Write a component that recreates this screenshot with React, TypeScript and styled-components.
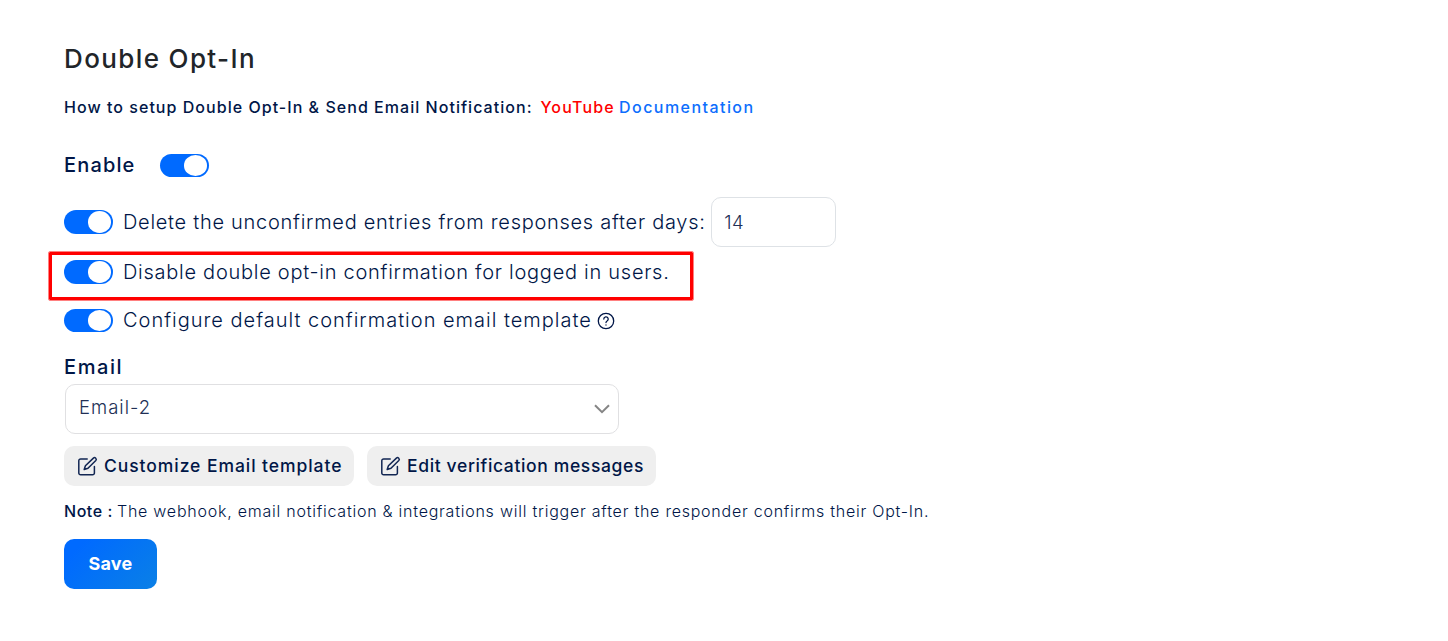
import React from "react";
import styled, { createGlobalStyle } from "styled-components";

const GlobalStyle = createGlobalStyle`
  *, *::before, *::after { box-sizing: border-box; }
  body { margin: 0; background: #fff; color: #001647; font-family: Inter, "Open Sans", sans-serif; }
  button, input { font-family: inherit; color: inherit; margin: 0; }
`;

const Page = styled.main`
  position: relative;
  display: flex;
  flex-direction: column;
  align-items: flex-start;
  width: 1448px;
  height: 641px;
  padding: 44px 64px 0;
  white-space: nowrap;
`;

const Title = styled.h1`
  margin: 0 0 23px;
  font-size: 26px;
  font-weight: 500;
  line-height: 30px;
  letter-spacing: 1.38px;
  color: #212529;
`;

const HelpLine = styled.div`
  display: flex;
  margin-bottom: 37px;
  font-size: 16px;
  font-weight: 500;
  line-height: 20px;
  letter-spacing: 1.035px;
`;

const HelpLink = styled.a<{ $color: string; $gap: number; $tracking: number }>`
  margin-left: ${(p) => p.$gap}px;
  letter-spacing: ${(p) => p.$tracking}px;
  color: ${(p) => p.$color};
`;

const EnableRow = styled.div`
  display: flex;
  align-items: center;
  height: 23px;
  margin-bottom: 20px;
`;

const FieldLabel = styled.span<{ $tracking: number }>`
  font-size: 20px;
  font-weight: 500;
  line-height: 20px;
  letter-spacing: ${(p) => p.$tracking}px;
`;

const EnableLabel = styled(FieldLabel)`
  width: 96px;
  padding-bottom: 2px;
`;

const OptionRow = styled.div<{ $height: number; $after: number }>`
  display: flex;
  align-items: center;
  height: ${(p) => p.$height}px;
  margin-bottom: ${(p) => p.$after}px;
`;

const OptionText = styled.span<{ $tracking: number; $raise?: number }>`
  margin-left: 10.4px;
  padding-bottom: ${(p) => p.$raise ?? 0}px;
  font-size: 20px;
  font-weight: 300;
  line-height: 24px;
  letter-spacing: ${(p) => p.$tracking}px;
`;

const Track = styled.span<{ $height: number }>`
  display: flex;
  align-items: center;
  justify-content: flex-end;
  width: 48.6px;
  height: ${(p) => p.$height}px;
  padding-right: 1.3px;
  border-radius: 12px;
  background: #006aff;
`;

const Knob = styled.span`
  width: 23.5px;
  height: calc(100% - 2px);
  border-radius: 50%;
  background: #fff;
`;

const DaysInput = styled.input`
  width: 125px;
  height: 50px;
  margin-left: 5.6px;
  padding: 0 12px 1px;
  border: 1px solid #dee2e6;
  border-radius: 10px;
  font-size: 18.5px;
  font-weight: 300;
  letter-spacing: 0.6px;
  color: #212f55;
  outline: none;
`;

const HelpIcon = styled.svg`
  margin-left: 5.6px;
`;

const SelectBox = styled.div`
  display: flex;
  align-items: center;
  justify-content: space-between;
  width: 554px;
  height: 50px;
  margin: 7px 0 12px 1px;
  padding: 0 8px 0 13px;
  border: 1px solid #e0e0e2;
  border-radius: 10px;
`;

const SelectValue = styled.span`
  padding-bottom: 4px;
  font-size: 18.5px;
  font-weight: 300;
  letter-spacing: 1px;
  color: #212f55;
`;

const ButtonRow = styled.div`
  display: flex;
  gap: 13px;
  margin-bottom: 15px;
`;

const GreyButton = styled.button<{ $width: number; $tracking: number }>`
  display: flex;
  align-items: center;
  gap: 6px;
  width: ${(p) => p.$width}px;
  height: 40px;
  padding: 0 0 0 13px;
  border: 0;
  border-radius: 10px;
  background: #efefef;
  font-size: 17.5px;
  font-weight: 500;
  letter-spacing: ${(p) => p.$tracking}px;
`;

const ButtonText = styled.span`
  padding-bottom: 2px;
`;

const Note = styled.p`
  margin: 0 0 18px;
  font-size: 16px;
  font-weight: 300;
  line-height: 20px;
  letter-spacing: 0.76px;
`;

const NoteLead = styled.strong`
  margin-right: -1.2px;
  font-weight: 500;
  letter-spacing: 0.55px;
`;

const SaveButton = styled.button`
  width: 93px;
  height: 50px;
  padding: 0 0 1px;
  border: 0;
  border-radius: 10px;
  background: linear-gradient(135deg, #006aff 15%, #0a80e6 100%);
  font-size: 18px;
  font-weight: 700;
  letter-spacing: 0.2px;
  && { color: #fff; }
`;

const Highlight = styled.div`
  position: absolute;
  left: 48px;
  top: 251px;
  width: 646px;
  height: 50px;
  border: 1px solid #ff8080;
  border-radius: 2px;
  box-shadow: inset 0 0 0 3px #ff0000;
`;

function Toggle({ height = 24 }: { height?: number }) {
  return (
    <Track role="switch" aria-checked="true" $height={height}>
      <Knob />
    </Track>
  );
}

function EditIcon() {
  return (
    <svg width="21" height="21" viewBox="0 0 21 21" fill="none" stroke="#122653" strokeWidth="1.5" strokeLinecap="round" strokeLinejoin="round">
      <path d="M10.2 2.9H3.6A1.8 1.8 0 0 0 1.8 4.7V16.9a1.8 1.8 0 0 0 1.8 1.8H15.6a1.8 1.8 0 0 0 1.8-1.8V10.6" />
      <path d="M16.4 2.1a1.7 1.7 0 0 1 2.4 2.4L11 12.3l-3.8 1.2 1.2-3.7Z" />
    </svg>
  );
}

export default function App() {
  return (
    <>
      <GlobalStyle />
      <Page>
        <Title>Double Opt-In</Title>
        <HelpLine>
          <span>How to setup Double Opt-In &amp; Send Email Notification:</span>
          <HelpLink $color="#ff0000" $gap={8} $tracking={1.1}>YouTube</HelpLink>
          <HelpLink $color="#0d6efd" $gap={4.4} $tracking={1.45}>Documentation</HelpLink>
        </HelpLine>
        <EnableRow>
          <EnableLabel $tracking={1.15}>Enable</EnableLabel>
          <Toggle height={23} />
        </EnableRow>
        <OptionRow $height={50} $after={13}>
          <Toggle />
          <OptionText $tracking={0.72}>Delete the unconfirmed entries from responses after days:</OptionText>
          <DaysInput defaultValue="14" aria-label="Days" />
        </OptionRow>
        <OptionRow $height={24} $after={25}>
          <Toggle />
          <OptionText $tracking={0.73}>Disable double opt-in confirmation for logged in users.</OptionText>
        </OptionRow>
        <OptionRow $height={23} $after={25}>
          <Toggle height={23} />
          <OptionText $tracking={0.99} $raise={2}>Configure default confirmation email template</OptionText>
          <HelpIcon width="18" height="18" viewBox="0 0 18 18" fill="none" stroke="#001647" strokeWidth="1.3" strokeLinecap="round">
            <circle cx="9" cy="9" r="7.7" />
            <path d="M6.8 7.1a2.2 2.2 0 1 1 3.3 1.9c-.8.45-1.1.8-1.1 1.5" />
            <path d="M9 12.9v.1" />
          </HelpIcon>
        </OptionRow>
        <FieldLabel $tracking={1.6}>Email</FieldLabel>
        <SelectBox>
          <SelectValue>Email-2</SelectValue>
          <svg width="16" height="10" viewBox="0 0 16 10" fill="none" stroke="#858585" strokeWidth="2">
            <path d="M1 1.2 8 8.2 15 1.2" />
          </svg>
        </SelectBox>
        <ButtonRow>
          <GreyButton $width={290} $tracking={0.94}>
            <EditIcon />
            <ButtonText>Customize Email template</ButtonText>
          </GreyButton>
          <GreyButton $width={289} $tracking={0.64}>
            <EditIcon />
            <ButtonText>Edit verification messages</ButtonText>
          </GreyButton>
        </ButtonRow>
        <Note>
          <NoteLead>Note :</NoteLead> The webhook, email notification &amp; integrations will trigger after the responder confirms their Opt-In.
        </Note>
        <SaveButton>Save</SaveButton>
        <Highlight />
      </Page>
    </>
  );
}
